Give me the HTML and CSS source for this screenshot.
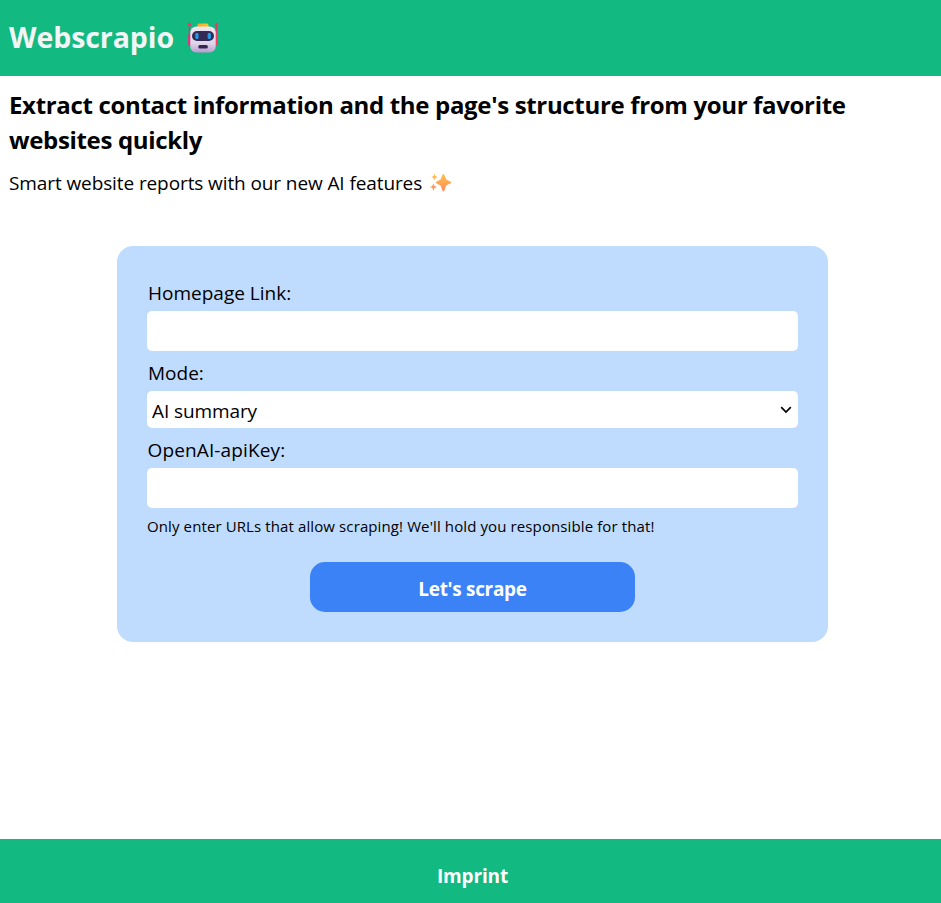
FILE: index.html
```html
<!DOCTYPE html>
<html lang="en">
<head>
<meta charset="utf-8">
<meta name="viewport" content="width=device-width, initial-scale=1">
<title>Webscrapio</title>
<link rel="stylesheet" href="styles.css">
</head>
<body>
<header class="header">
  <h1 class="brand">Webscrapio</h1>
  <svg class="robot" viewBox="0 0 32 32" aria-hidden="true">
    <defs>
      <linearGradient id="face" x1="0" y1="0" x2="0" y2="1"><stop offset="0" stop-color="#eee8f0"/><stop offset=".65" stop-color="#dfd5ea"/><stop offset="1" stop-color="#b99bd0"/></linearGradient>
      <linearGradient id="cap" x1="0" y1="0" x2="1" y2="0"><stop offset="0" stop-color="#f5a72c"/><stop offset="1" stop-color="#ffc719"/></linearGradient>
    </defs>
    <path d="M2.500 3v16M29.500 3v16" stroke="#d83d6d" stroke-width="1.500"/>
    <circle cx="2.500" cy="2.300" r="1.600" fill="#e83b60"/><circle cx="29.500" cy="2.300" r="1.600" fill="#e83b60"/>
    <rect x="1" y="12" width="4" height="12" rx="2" fill="#d13c7b"/><rect x="27" y="12" width="4" height="12" rx="2" fill="#f23f68"/>
    <rect x="10.500" y="1.500" width="11" height="5" rx="1.500" fill="url(#cap)"/>
    <rect x="3.300" y="4.500" width="25.400" height="26" rx="6" fill="url(#face)"/>
    <rect x="5" y="9" width="22" height="10" rx="5" fill="#342b55"/>
    <rect x="8.300" y="11" width="3.200" height="6" rx="1.300" fill="#239be8"/><rect x="20.700" y="11" width="3.200" height="6" rx="1.300" fill="#239be8"/>
    <rect x="11.300" y="23" width="9.500" height="3.500" rx="1.500" fill="#34264f"/>
  </svg>
</header>
<main class="main">
  <h2 class="headline">Extract contact information and the page's structure from your favorite websites quickly</h2>
  <p class="tagline"><span class="tagline-text">Smart website reports with our new AI features</span>
    <svg class="sparkles" viewBox="0 0 22 20" aria-hidden="true">
      <defs><linearGradient id="spark" gradientUnits="userSpaceOnUse" x1="0" y1="0" x2="0" y2="20"><stop offset="0" stop-color="#ffc447"/><stop offset="1" stop-color="#ff8760"/></linearGradient></defs>
      <g fill="url(#spark)">
        <path d="M12.500 1.700q.9-1.500 1.800 0l2 4.800 4.300 2.200q1.300.8 0 1.600l-4.300 2.200-2 5.300q-.9 1.500-1.800 0l-2-5.300-4.200-2.200q-1.300-.8 0-1.600l4.200-2.200z"/>
        <path d="M4.500.7l.9 2.300 2.200.9-2.200 1-.9 2.300-.9-2.300-2.200-1L3.600 3z"/>
        <path d="M3.400 10.300l1.100 2.600 2.500 1-2.500 1.100-1.100 2.800L2.300 15l-2.300-1.100 2.300-1z"/>
      </g>
    </svg>
  </p>
  <form class="form">
    <label class="label" for="link">Homepage Link:</label>
    <input class="field" id="link" type="text">
    <label class="label label-mode" for="mode">Mode:</label>
    <div class="select-wrap">
      <select class="field select" id="mode"><option>AI summary</option></select>
      <svg class="chevron" viewBox="0 0 12 8" aria-hidden="true"><path d="M1.200 1.200 6 6l4.800-4.800" fill="none" stroke="#000" stroke-width="1.700"/></svg>
    </div>
    <label class="label label-key" for="key">OpenAI-apiKey:</label>
    <input class="field" id="key" type="text">
    <p class="note">Only enter URLs that allow scraping! We'll hold you responsible for that!</p>
    <button class="submit" type="button">Let's scrape</button>
  </form>
</main>
<footer class="footer"><a class="imprint">Imprint</a></footer>
</body>
</html>
```
FILE: styles.css
```css
* { box-sizing: border-box; }
body { margin: 0; min-height: 100vh; display: flex; flex-direction: column; font-family: "Open Sans", "Noto Sans", sans-serif; font-size: 19px; color: #000; background: #fff; }
.header { height: 76px; padding: 0 9px; display: flex; align-items: center; background: #12b981; }
.brand { margin: 0; padding-bottom: 2px; font-size: 28.5px; line-height: 40px; letter-spacing: -0.08px; color: #f3f4f6; }
.robot { width: 32px; height: 32px; margin-left: 13px; }
.main { flex: 1; padding: 11px 9px 0; }
.headline { margin: 0; font-size: 24px; line-height: 35px; letter-spacing: -0.335px; }
.tagline { margin: 12px 0 0; height: 28px; line-height: 28px; display: flex; align-items: center; letter-spacing: -0.1px; }
.sparkles { width: 22px; height: 20px; margin-left: 8px; }
.form { width: 711px; height: 396px; margin: 49px 0 0 108px; padding: 33px 30px 30px; display: flex; flex-direction: column; border-radius: 16px; background: #bfdbfe; }
.label { height: 32px; line-height: 28px; padding-left: 1px; }
.label-mode { margin-top: 8px; }
.label-key { margin-top: 8px; padding-left: 0.5px; letter-spacing: 0.13px; }
.field { display: block; width: 100%; height: 40px; border: 0; border-radius: 5px; background: #fff; font: inherit; color: #000; padding: 0 5px; }
.select-wrap { position: relative; }
.select { height: 37px; padding-top: 2px; appearance: none; letter-spacing: -0.1px; }
.chevron { position: absolute; right: 6px; top: 15px; width: 12px; height: 8px; }
.note { margin: 7px 0 0; font-size: 15px; line-height: 22px; white-space: nowrap; letter-spacing: 0.11px; }
.submit { width: 325px; height: 50px; margin: 25px auto 0; padding: 3px 0 0; border: 0; border-radius: 15px; background: #3b82f6; color: #fff; font: inherit; font-weight: 700; letter-spacing: -0.32px; }
.footer { height: 64px; padding-left: 4px; display: flex; justify-content: center; background: #12b981; color: #fff; font-weight: 700; }
.imprint { padding-top: 23px; line-height: 28px; letter-spacing: -0.15px; }
```
